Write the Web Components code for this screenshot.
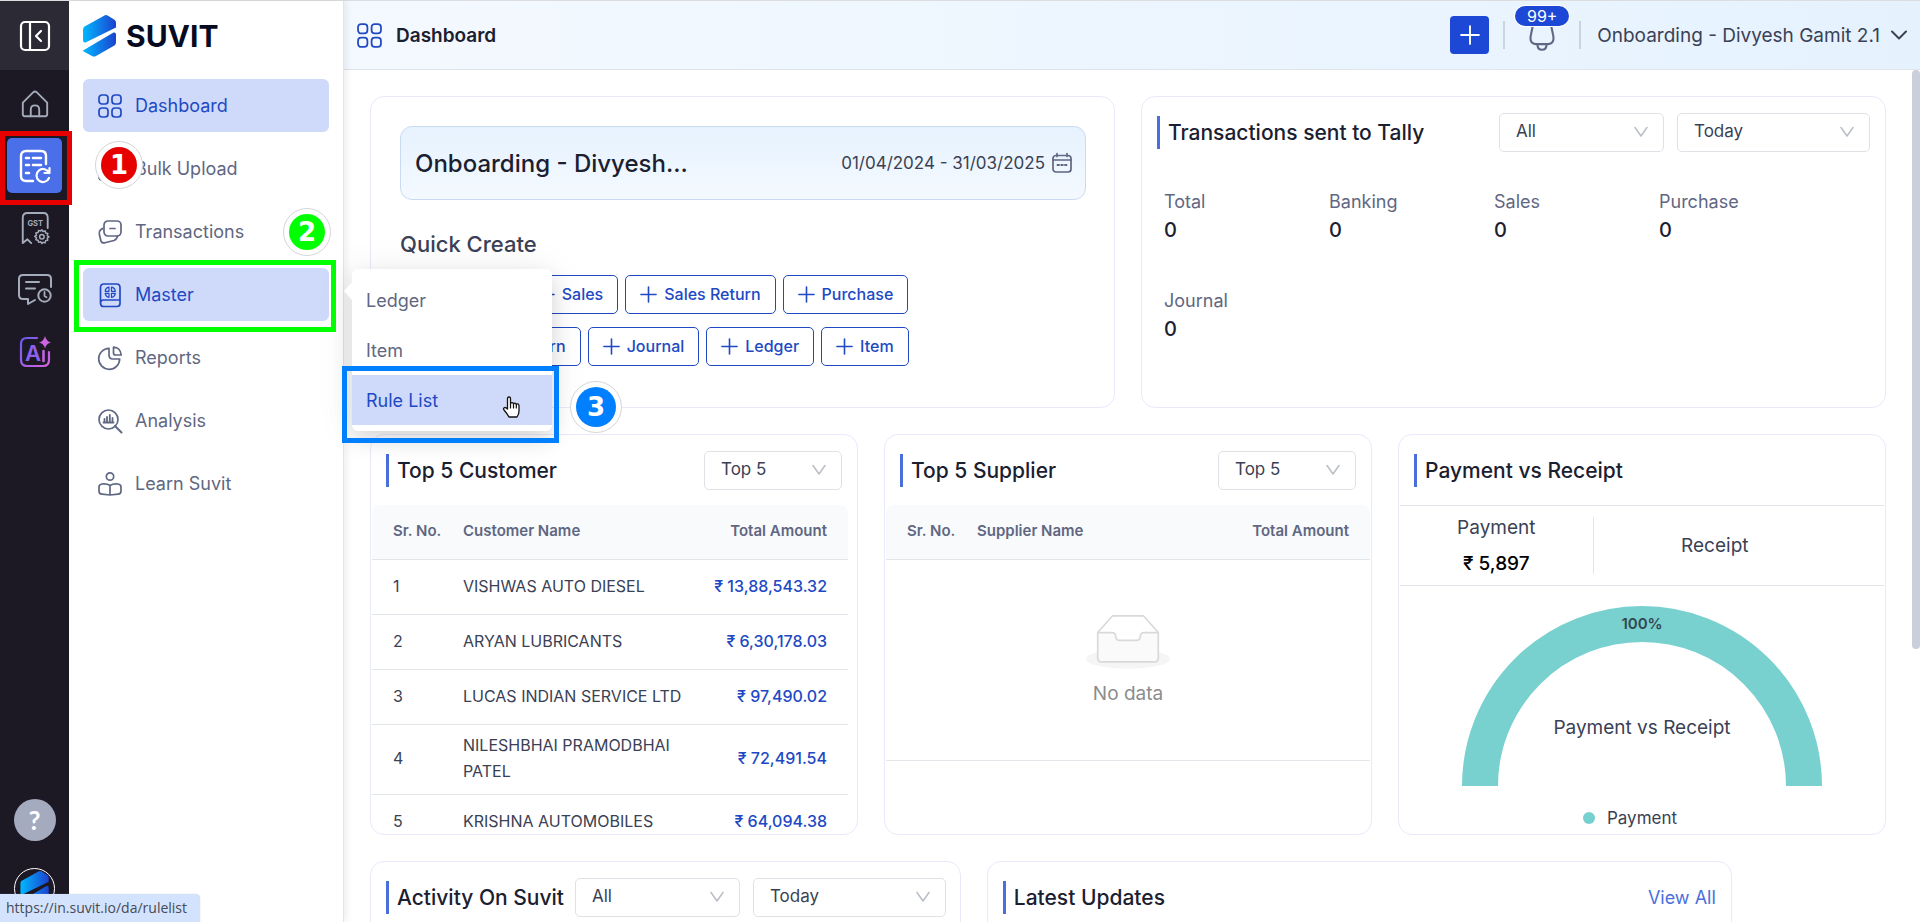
<!DOCTYPE html>
<html lang="en">
<head>
<meta charset="utf-8">
<title>Dashboard - Suvit</title>
<style>
html,body{margin:0;height:100%}
body{font-family:Inter,"Liberation Sans",sans-serif;font-size:17px;color:#3a4154;background:#fff;overflow:hidden}
</style>
</head>
<body>
<suvit-app></suvit-app>
<script>
const ICONS = {
  collapse: [32, '<rect x="2" y="2" width="28" height="28" rx="4" stroke-width="2.2"/><path d="M11 2v28M22 11l-5 5 5 5" stroke-width="2.2"/>'],
  home: [32, '<path d="M3 14.5 14 3.6q2-1.8 4 0L29 14.5V27q0 2-2 2H5q-2 0-2-2z" stroke-width="2"/><path d="M11.5 29v-7q0-4.5 4.5-4.5t4.5 4.5v7" stroke-width="2"/>'],
  ledger: [34, '<path d="M15 32H8q-5 0-5-5V7q0-5 5-5h15q5 0 5 5v8" stroke-width="2.4"/><path d="M8 9h3M15 9h8M8 16h3M15 16h8M8 24h3" stroke-width="2.6"/><path d="M31.500 19v5h-5M31 24a6.500 6.500 0 1 0 0 5" stroke-width="2.2"/>'],
  gst: [34, '<path d="M4 33V6q0-5 5-5h17q4.500 0 4.500 5v11M4 33l5-4 4 4" stroke-width="2"/><text x="9" y="15" font-size="8" font-weight="700" fill="currentColor" stroke="none">GST</text><path d="m23 19 1.500 2.200 2.600-.8.6 2.700 2.700.6-.8 2.600 2.200 1.500-2.200 1.500.8 2.600-2.700.6-.6 2.700-2.600-.8L23 36l-1.500-2.200-2.600.8-.6-2.700-2.700-.6.8-2.600-2.200-1.500 2.200-1.500-.8-2.600 2.700-.6.6-2.700 2.600.8z" transform="translate(4.500 2.500) scale(.86)" stroke-width="1.800"/><circle cx="24.300" cy="26.300" r="2.400" stroke-width="1.600"/>'],
  chat: [34, '<path d="M33 14V6q0-4-4-4H5Q1 2 1 6v16q0 4 4 4h5v5l7-4" stroke-width="2"/><path d="M8 9h13M8 15.500h9" stroke-width="2"/><circle cx="26.500" cy="22.500" r="6.200" stroke-width="2"/><path d="M26.500 19v4l2 1.200" stroke-width="1.800"/>'],
  ai: [34, '<defs><linearGradient id="g" x1="0" y1="0" x2="1" y2="1"><stop offset="0" stop-color="#6a5af0"/><stop offset="1" stop-color="#d964dd"/></linearGradient></defs><path d="M19 3H9Q3 3 3 9v16q0 6 6 6h16q6 0 6-6V17" stroke="url(#g)" stroke-width="2.200"/><text x="7" y="26" font-size="22" font-weight="600" fill="#8f5fee" stroke="none">A</text><path d="M25.500 16v10" stroke="#c062e4" stroke-width="2.600"/><path d="M27 1q1.200 5.300 6 6.500-4.800 1.200-6 6-1.200-4.800-6-6 4.800-1.200 6-6.500z" fill="#cc63e0" stroke="none"/>'],
  grid: [24, '<rect x="1" y="1" width="9" height="9" rx="3"/><rect x="14" y="1" width="9" height="9" rx="3"/><rect x="1" y="14" width="9" height="9" rx="3"/><rect x="14" y="14" width="9" height="9" rx="3"/>'],
  upload: [24, '<path d="M1 16v4q0 3 3 3h16q3 0 3-3v-4M12 16V2M6 8l6-6 6 6"/>'],
  cards: [24, '<rect x="6" y="1" width="17" height="15" rx="4"/><path d="M12 8.500h5M4.500 8.500 2.500 10q-1.800 1.500-1.200 4l1.500 6.500q.8 3 4 2.300l9.200-2.300q3-1 3.500-4.500"/>'],
  book: [24, '<path d="M2.500 20V4.500Q2.500 1 6 1h12.500Q22 1 22 4.500v16q0 3-3 3H5.500q-3 0-3-3.500 0-3 3-3H22"/><path d="M11 4.200Q7.500 4.800 7.200 8.300H11zM13.500 4.200q3.500.6 3.800 4.100h-3.800zM7.200 10.300q.5 3.300 3.800 4v-4zM17.300 10.300q-.5 3.300-3.800 4v-4z" stroke-width="1.200"/>'],
  pie: [24, '<path d="M11 2.300A10.500 10.500 0 1 0 21.700 13H15q-4 0-4-4z"/><path d="M15.500 1q7 .7 7.700 8h-5.700q-2 0-2-2z"/>'],
  analysis: [24, '<circle cx="10.500" cy="10.500" r="9.500"/><path d="m17 17 6.500 6.500" stroke-width="2"/><path d="M6.500 12.500V10M9 12.500V8M11.800 12.500V6M14.500 12.500V9M5.500 13.500h10" stroke-width="1.800"/>'],
  learn: [24, '<circle cx="12" cy="4.500" r="3.700"/><path d="M12 13.500v9M12 13.500q-3-2-8-1.500-3 .3-3 3V19q0 3 3 3.200l8 .8 8-.8q3-.2 3-3.200v-4q0-2.700-3-3-5-.5-8 1.500"/>'],
  bell: [26, '<path d="M6.500 3.500 4.500 13q-1 4 1 6 1 1 3 1h9q2 0 3-1 2-2 1-6l-2-9.500" stroke-width="1.600"/><path d="M9.500 20.500q.3 3.800 3.500 3.800t3.500-3.800" stroke-width="1.600"/>'],
  calendar: [20, '<rect x="1" y="2.500" width="18" height="16.500" rx="3"/><path d="M1 7h18M5 .5v3M15 .5v3"/><path d="M5.500 12h1.500M9.300 12h1.500M13 12h1.500" stroke-width="2"/>'],
  plus: [18, '<path d="M9 1v16M1 9h16"/>'],
  down: [16, '<path d="M2 3.500 8 12l6-8.500" stroke-width="1.500"/>'],
  chevron: [18, '<path d="m2 5.500 7 7 7-7" stroke-width="2"/>'],
  hand: [24, '<path d="M8.500 14V3.500q0-1.500 1.500-1.500t1.500 1.500V9q0-1.300 1.500-1.300t1.500 1.500q0-1 1.300-1t1.500 1.500q.2-.8 1.300-.8T20 10.500V16q0 3-2 6h-8q-1.500-3-5-7-1-1.500.2-2.300 1.300-.8 3.300 1.300z" fill="#fff" stroke="#111" stroke-width="1.300"/><path d="M11.500 9v4M14.500 9.500v3.500M17.300 10v3" stroke="#111" stroke-width="1.200"/>'],
  logo: [42, '<defs><linearGradient id="l"><stop offset="0" stop-color="#00b8ff"/><stop offset="1" stop-color="#1c42d0"/></linearGradient></defs><g fill="url(#l)" stroke="none"><path d="M4 14.500q0-2 1.600-3L25 .7q2-1.200 4 0l6.500 4q1.500 1 1.500 3v4.800L6.500 27.500Q4 28 4 25z"/><path d="M4 35.500 34.500 17.500Q37 17 37 19.500v8q0 2-1.600 3L17 41q-2 1-4 0l-7.500-4q-1.500-.8-1.500-1.500z"/></g>'],
  inbox: [88, '<ellipse cx="44" cy="47" rx="43" ry="10" fill="#f5f5f5" stroke="none"/><path d="M13 20 28 3h32l15 17" fill="#fff" stroke="#d9d9d9"/><path d="M13 20h15q3 0 3.500 4 .5 4 3 4h19q2.500 0 3-4t3.500-4h15v26q0 4-4 4H17q-4 0-4-4z" fill="#fafafa" stroke="#d9d9d9"/>']
};

/* Registers an element whose shadow root is filled from a style and a render function. */
function define(name, css, render) {
  customElements.define(name, class extends HTMLElement {
    constructor() {
      super();
      this.attachShadow({ mode: 'open' });
    }
    connectedCallback() {
      const a = key => this.getAttribute(key) || '';
      const t = document.createElement('template');
      t.innerHTML = `<style>*{box-sizing:border-box}${css}</style>${render(a, this)}`;
      this.shadowRoot.replaceChildren(t.content.cloneNode(true));
    }
  });
}

define('ui-icon', ':host{display:inline-flex;flex:none}svg{display:block;overflow:visible;fill:none;stroke:currentColor;stroke-width:1.700;stroke-linecap:round;stroke-linejoin:round;font-family:Inter,sans-serif}', a => {
  const [box, body] = ICONS[a('name')];
  const size = a('size') || box;
  return `<svg width="${size}" height="${size}" viewBox="0 0 ${box} ${box}" aria-hidden="true">${body}</svg>`;
});

define('step-frame', ':host{position:absolute;box-sizing:border-box;border:5px solid var(--tone);pointer-events:none;z-index:5}', () => '');

define('step-badge', `
:host{position:absolute;width:48px;height:48px;border-radius:50%;box-sizing:border-box;border:1px solid #d6d6da;background:#fff;padding:5px;z-index:6}
span{display:flex;align-items:center;justify-content:center;height:100%;border-radius:50%;background:var(--tone);color:#fff;font:700 26px/1 "DejaVu Sans",sans-serif}
`, () => '<span><slot></slot></span>');

define('rail-link', `
:host{display:flex;position:relative}
a{display:flex;align-items:center;justify-content:center;width:55px;height:55px;border-radius:5px;color:#a4abbb}
:host([active]) a{background:#4a6fe8;color:#fff}
`, a => `<a href="#${a('icon')}" aria-label="${a('label')}"><ui-icon name="${a('icon')}" size="${a('size')}"></ui-icon></a><slot></slot>`);

define('app-rail', `
:host{display:flex;flex-direction:column;align-items:center;width:69px;flex:none;background:#1c1924;z-index:3}
.toggle{width:100%;height:69px;border:0;background:#2c2b35;color:#fff;display:flex;align-items:center;justify-content:center;padding:0}
nav{display:flex;flex-direction:column;gap:7px;margin-top:6px}
.foot{margin-top:auto;display:flex;flex-direction:column;align-items:center;gap:27px;margin-bottom:13px}
.help{width:42px;height:42px;border-radius:50%;border:0;background:#a4abbe;color:#fff;font:700 26px/1 Lato,sans-serif;padding:0}
.me{width:41px;height:41px;border-radius:50%;border:1px solid #fff;display:flex;align-items:center;justify-content:center;overflow:hidden}
step-frame{left:-7px;top:-7px;width:72px;height:74px}
`, () => `
<button class="toggle" aria-label="Collapse menu"><ui-icon name="collapse"></ui-icon></button>
<nav aria-label="Products">
<rail-link icon="home" size="30" label="Home"></rail-link>
<rail-link icon="ledger" size="34" label="Accounting" active><step-frame style="--tone:#e60000"></step-frame></rail-link>
<rail-link icon="gst" size="32" label="GST"></rail-link>
<rail-link icon="chat" size="34" label="Requests"></rail-link>
<rail-link icon="ai" size="34" label="AI"></rail-link>
</nav>
<div class="foot"><button class="help" aria-label="Help">?</button><a class="me" href="#profile" aria-label="Profile"><ui-icon name="logo" size="36"></ui-icon></a></div>`);

define('nav-item', `
:host{display:block;position:relative}
a{display:flex;align-items:center;gap:13px;height:53px;padding:0 15px;border-radius:6px;color:#5f6782;font-size:18px;text-decoration:none}
:host([active]) a{background:#cfd9f9;color:#2149c4}
`, a => `<a href="#${a('icon')}"><ui-icon name="${a('icon')}"></ui-icon>${a('label')}</a><slot></slot>`);

define('sub-menu', `
:host{position:absolute;left:269px;top:1px;width:200px;padding:6px 0;background:#fff;border-radius:6px;box-shadow:0 8px 20px rgba(0,0,0,.12),0 2px 40px rgba(0,0,0,.07);z-index:4}
:host::before{content:"";position:absolute;left:-8px;top:13px;border:solid transparent;border-width:9px 8px 9px 0;border-right-color:#fff}
a{display:flex;align-items:center;height:50px;padding:0 14px;color:#5f6782;font-size:18px;text-decoration:none;position:relative}
a[aria-current]{background:#cfd9f9;color:#2149c4}
step-frame{left:-10px;top:-9px;width:217px;height:77px}
step-badge{left:218px;top:6px;width:52px;height:52px}
ui-icon{position:absolute;left:147px;top:20px}
`, () => `
<a href="#ledger-list">Ledger</a><a href="#item-list">Item</a>
<a href="#rulelist" aria-current="true">Rule List<ui-icon name="hand"></ui-icon><step-frame style="--tone:#0080ff"></step-frame><step-badge style="--tone:#0080ff">3</step-badge></a>`);

define('app-sidebar', `
:host{display:block;width:275px;flex:none;box-sizing:border-box;padding:14px 14px 0;border-right:1px solid #e4e4e8;background:#fff;box-shadow:2px 0 8px rgba(0,0,0,.08);z-index:2}
.brand{display:flex;align-items:center;height:41px;gap:5px;margin:0 0 23px -4px;color:#060b22;font-size:30px;font-weight:700;text-decoration:none}
nav{display:flex;flex-direction:column;gap:10px}
step-frame{left:-9px;top:-8px;width:262px;height:72px}
.one{left:12px;top:-1px}.two{left:200px;top:3px}
`, () => `
<a class="brand" href="#home"><ui-icon name="logo"></ui-icon>SUVIT</a>
<nav aria-label="Main">
<nav-item icon="grid" label="Dashboard" active></nav-item>
<nav-item icon="upload" label="Bulk Upload"><step-badge class="one" style="--tone:#e60000">1</step-badge></nav-item>
<nav-item icon="cards" label="Transactions"><step-badge class="two" style="--tone:#00ff00">2</step-badge></nav-item>
<nav-item icon="book" label="Master" active><step-frame style="--tone:#00ff00"></step-frame><sub-menu></sub-menu></nav-item>
<nav-item icon="pie" label="Reports"></nav-item>
<nav-item icon="analysis" label="Analysis"></nav-item>
<nav-item icon="learn" label="Learn Suvit"></nav-item>
</nav>`);

define('app-header', `
:host{display:flex;align-items:center;height:69px;flex:none;box-sizing:border-box;padding:0 12px 0 13px;border-bottom:1px solid #dfe3ea;background:linear-gradient(90deg,#f4f9ff,#e5f2fe);color:#3a4154}
h1{margin:0 auto 0 14px;font-size:19px;font-weight:600;color:#1b2030}
ui-icon{display:flex}
.title{color:#2149c4}
button{border:0;background:none;padding:0;font:inherit;color:inherit;display:flex;align-items:center}
.add{width:39px;height:38px;justify-content:center;border-radius:4px;background:#1d48d6;color:#fff}
i{width:2px;height:28px;background:#cdd3dd;margin:0 14px}
.bell{position:relative;color:#5f6782;margin:0 6px}
.bell span{position:absolute;left:50%;bottom:26px;transform:translateX(-50%);width:54px;height:20px;border-radius:10px;background:#1d48d6;box-shadow:0 0 0 1px #fff;color:#fff;font-size:16px;line-height:20px;text-align:center}
.org{font-size:19px;gap:10px;margin-left:2px}
`, () => `
<ui-icon class="title" name="grid" size="25"></ui-icon><h1>Dashboard</h1>
<button class="add" aria-label="Create"><ui-icon name="plus" size="20"></ui-icon></button><i></i>
<button class="bell" aria-label="Notifications"><ui-icon name="bell" size="34"></ui-icon><span>99+</span></button><i></i>
<button class="org">Onboarding - Divyesh Gamit 2.1<ui-icon name="chevron"></ui-icon></button>`);

define('ui-select', `
:host{display:block;position:relative;flex:none;width:var(--w)}
select{appearance:none;display:block;width:100%;height:39px;padding:0 40px 2px 16px;border:1px solid #dfe1e6;border-radius:5px;background:#fff;color:#3a4154;font:400 17px Inter,sans-serif}
ui-icon{position:absolute;right:15px;top:11px;color:#b9bdc6;pointer-events:none}
`, a => `<select aria-label="${a('label')}"><option>${a('value')}</option></select><ui-icon name="down"></ui-icon>`);

define('dash-card', `
:host{display:flex;flex-direction:column;box-sizing:border-box;min-width:0;border:1px solid #e8eafa;border-radius:14px;background:#fff;overflow:hidden}
header{display:flex;align-items:center;gap:13px;height:70px;flex:none;padding:0 15px}
h2{display:flex;align-items:center;gap:8px;margin:0 auto 0 0;font-size:21px;font-weight:500;color:#1b2030;white-space:nowrap}
h2::before{content:"";width:3px;height:33px;background:#4a6fdc}
:host([tight]) h2{margin:0 -2px 0 0}
`, a => `<header><h2>${a('heading')}</h2><slot name="tools"></slot></header><slot></slot>`);

define('quick-button', `
button{display:flex;align-items:center;gap:7px;height:39px;padding:0 14px 1px;border:1px solid #2149c4;border-radius:5px;background:#fff;color:#2149c4;font:500 16px Inter,sans-serif;white-space:nowrap}
`, () => '<button><ui-icon name="plus" size="17"></ui-icon><slot></slot></button>');

define('company-card', `
:host{display:block;box-sizing:border-box;border:1px solid #e8eafa;border-radius:14px;padding:29px 28px 0 29px}
.company{display:flex;align-items:center;height:74px;box-sizing:border-box;padding:0 13px 0 14px;border:1px solid #c9dbf3;border-radius:12px;background:linear-gradient(#e6f2fe,#f4f9ff)}
strong{margin-right:auto;font-size:24px;font-weight:500;color:#1b2030}
button{display:flex;align-items:center;gap:7px;padding:0;border:0;background:none;color:#3a4154;font:400 17px Inter,sans-serif}
ui-icon{color:#5f6782}
h2{margin:29px 0 16px;font-size:22px;line-height:30px;font-weight:500;color:#3a4154}
.row{display:flex;gap:7px;margin-bottom:13px}
`, () => `
<div class="company"><strong>Onboarding - Divyesh...</strong><button>01/04/2024 - 31/03/2025<ui-icon name="calendar"></ui-icon></button></div>
<h2>Quick Create</h2>
<div class="row"><quick-button>Banking</quick-button><quick-button>Sales</quick-button><quick-button>Sales Return</quick-button><quick-button>Purchase</quick-button></div>
<div class="row"><quick-button>Purchase Return</quick-button><quick-button>Journal</quick-button><quick-button>Ledger</quick-button><quick-button>Item</quick-button></div>`);

define('tally-stats', `
dl{display:grid;grid-template-columns:repeat(4,165px);row-gap:43px;margin:21px 0 0 22px}
dt{font-size:18px;line-height:28px;color:#5f6782}
dd{margin:0;font-size:20px;line-height:28px;font-weight:500;color:#1b2030}
`, () => '<dl>' + ['Total', 'Banking', 'Sales', 'Purchase', 'Journal'].map(s => `<div><dt>${s}</dt><dd>0</dd></div>`).join('') + '</dl>');

define('rank-table', `
:host{display:block;padding:0 1px}
:host([scroll]){padding-right:9px}
table{width:100%;table-layout:fixed;border-spacing:0;line-height:26px}
th{height:55px;padding:0 0 2px;background:#f8fafc;color:#5f6782;font-size:15px;font-weight:600;text-align:left;border-bottom:1px solid #e2e5e9}
th:first-child{border-top-left-radius:8px}th:last-child{border-top-right-radius:8px}
td{height:55px;padding:7px 0 10px;border-bottom:1px solid #e2e5e9;color:#3a4154;font-size:16px}
tr>:nth-child(1){width:91px;padding-left:21px}
tr>:nth-child(3){width:152px;padding-right:21px;text-align:right}
td:nth-child(3){color:#2149c4;font-weight:500}
tr>.empty{width:auto;height:201px;padding:0;text-align:center;color:#8c8c8c;font-size:19px}
.empty ui-icon{display:flex;justify-content:center;height:68px}
`, (a, el) => {
  const rows = [...el.querySelectorAll('data')].map((d, i) => `<tr><td>${i + 1}</td><td>${d.textContent}</td><td>₹ ${d.value}</td></tr>`).join('');
  return `<table><thead><tr><th>Sr. No.</th><th>${a('kind')} Name</th><th>Total Amount</th></tr></thead><tbody>${rows || '<tr><td class="empty" colspan="3"><ui-icon name="inbox" size="86"></ui-icon>No data</td></tr>'}</tbody></table>`;
});

define('payment-chart', `
:host{display:block}
.sum{display:grid;grid-template-columns:2fr 3fr;align-items:center;height:81px;border:solid #e2e5e9;border-width:1px 0;margin:0 1px;text-align:center;font-size:19px}
.sum>div{display:flex;flex-direction:column;justify-content:center;gap:8px;line-height:28px;height:57px}
.sum>div:first-child{border-right:1px solid #e2e5e9}
.sum>div:last-child{padding-right:48px}
b{font-weight:500;color:#000}
svg{display:block;width:360px;height:180px;margin:20px auto 0;overflow:visible;font-family:Inter,sans-serif}
.key{display:flex;align-items:center;justify-content:center;gap:12px;margin:20px 24px 0 0;line-height:24px;font-size:17px}
.key::before{content:"";width:12px;height:12px;border-radius:50%;background:#76d0cf}
`, () => `
<div class="sum"><div>Payment<b>₹ 5,897</b></div><div>Receipt</div></div>
<svg viewBox="0 0 360 180" role="img" aria-label="Payment vs Receipt"><path d="M18 180a162 162 0 0 1 324 0" fill="none" stroke="#78d1cf" stroke-width="36"/><text x="180" y="23" font-size="15" font-weight="600" fill="#34474f" text-anchor="middle">100%</text><text x="180" y="128" font-size="19" fill="#3a4154" text-anchor="middle">Payment vs Receipt</text></svg>
<div class="key">Payment</div>`);

define('app-dashboard', `
:host{display:block;flex:1;min-height:0;position:relative}
main{height:100%;overflow-y:auto;scrollbar-width:none;padding:26px 34px 26px 26px;display:grid;gap:26px;align-content:start}
section{display:grid;gap:26px}
.a{grid-template-columns:1fr 1fr;grid-auto-rows:312px}
.b{grid-template-columns:repeat(3,1fr);grid-auto-rows:401px}
.c{grid-template-columns:repeat(10,1fr);grid-auto-rows:400px}
.c>:first-child{grid-column:span 4}.c>:last-child{grid-column:span 5}
.thumb{position:absolute;right:0;top:0;width:8px;height:68%;border-radius:4px;background:#cbcedb}
a{color:#4a6fdc;font-size:18px;text-decoration:none}
`, () => `
<main>
<section class="a"><company-card></company-card>
<dash-card heading="Transactions sent to Tally"><ui-select slot="tools" label="Type" value="All" style="--w:165px"></ui-select><ui-select slot="tools" label="Period" value="Today" style="--w:193px"></ui-select><tally-stats></tally-stats></dash-card></section>
<section class="b">
<dash-card heading="Top 5 Customer"><ui-select slot="tools" label="Customers shown" value="Top 5" style="--w:138px"></ui-select>
<rank-table kind="Customer" scroll><data value="13,88,543.32">VISHWAS AUTO DIESEL</data><data value="6,30,178.03">ARYAN LUBRICANTS</data><data value="97,490.02">LUCAS INDIAN SERVICE LTD</data><data value="72,491.54">NILESHBHAI PRAMODBHAI PATEL</data><data value="64,094.38">KRISHNA AUTOMOBILES</data></rank-table></dash-card>
<dash-card heading="Top 5 Supplier"><ui-select slot="tools" label="Suppliers shown" value="Top 5" style="--w:138px"></ui-select><rank-table kind="Supplier"></rank-table></dash-card>
<dash-card heading="Payment vs Receipt"><payment-chart></payment-chart></dash-card></section>
<section class="c">
<dash-card heading="Activity On Suvit" tight><ui-select slot="tools" label="Activity" value="All" style="--w:165px"></ui-select><ui-select slot="tools" label="Activity period" value="Today" style="--w:193px"></ui-select></dash-card>
<dash-card heading="Latest Updates"><a slot="tools" href="#updates">View All</a></dash-card></section>
</main><div class="thumb"></div>`);

define('suvit-app', `
:host{display:flex;height:100vh;box-sizing:border-box;border-top:1px solid #dcdde0;position:relative}
.page{flex:1;min-width:0;display:flex;flex-direction:column}
.status{position:absolute;left:0;bottom:0;height:28px;padding:0 13px 0 6px;border-radius:0 5px 0 0;background:#d4e3fd;box-shadow:0 0 1px #9aa6bb;color:#454a54;font:14px/28px "Open Sans","Noto Sans",sans-serif;z-index:8}
`, () => `
<app-rail></app-rail><app-sidebar></app-sidebar>
<div class="page"><app-header></app-header><app-dashboard></app-dashboard></div>
<div class="status">https://in.suvit.io/da/rulelist</div>`);
</script>
</body>
</html>
